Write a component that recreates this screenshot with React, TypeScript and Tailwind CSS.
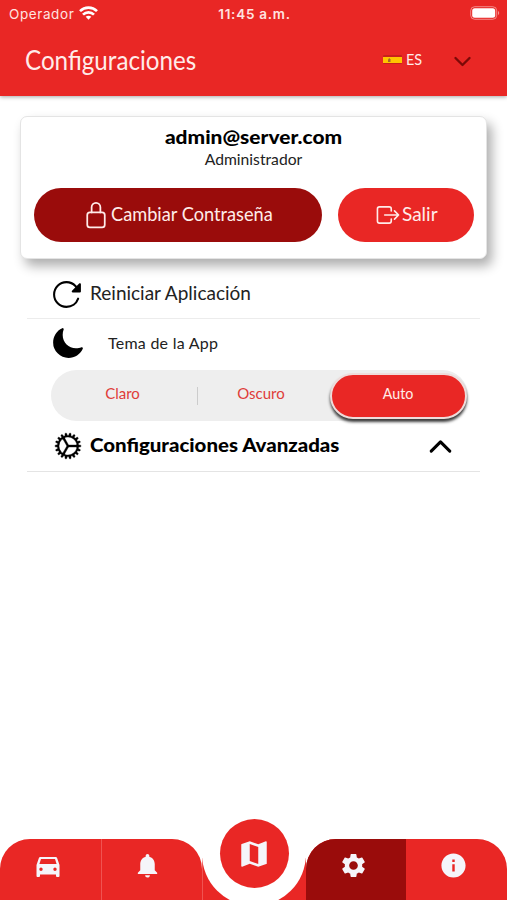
import React from 'react';
import {
  IoChevronDown,
  IoChevronUp,
  IoCogOutline,
  IoExitOutline,
  IoLockClosedOutline,
  IoMoon,
  IoReload,
} from 'react-icons/io5';
import { MdInfo, MdMap, MdNotifications, MdSettings } from 'react-icons/md';

const StatusBar: React.FC = () => (
  <div className="grid h-7 grid-cols-3 items-center pl-[9px] pr-[7px] font-['Inter',sans-serif] text-[13.5px] text-[#ffe3e0]">
    <div className="flex items-center gap-[5px]">
      <span className="tracking-[0.6px]">Operador</span>
      <svg className="mt-[-2px]" width="19" height="14" viewBox="0 0 19 14" fill="none" stroke="#fff" strokeWidth="2.7">
        <path d="M1 5.1c4.7-4.6 12.3-4.6 17 0" />
        <path d="M4 8.6c3.1-3 7.9-3 11 0" />
        <path d="M6.7 10.8L9.5 13.7l2.8-2.9c-1.6-1.5-4-1.5-5.6 0z" fill="#fff" stroke="none" />
      </svg>
    </div>
    <span className="whitespace-nowrap text-center font-semibold tracking-[0.75px]">11:45 a.m.</span>
    <svg className="mt-[-2px] justify-self-end" width="30" height="14" viewBox="0 0 30 14">
      <rect x="0.7" y="0.7" width="26" height="12.6" rx="4" fill="none" stroke="#fff" strokeOpacity="0.45" />
      <rect x="2.2" y="2.2" width="23" height="9.6" rx="2.5" fill="#fff" />
      <path d="M28 5v4c1.6-.7 1.6-3.3 0-4z" fill="#fff" fillOpacity="0.5" />
    </svg>
  </div>
);

const SpainFlag: React.FC = () => (
  <svg className="mt-[-4px]" width="19" height="11" viewBox="0 0 19 11">
    <rect y="1" width="19" height="9" rx="1" fill="#c8201c" />
    <rect y="3" width="19" height="6" fill="#ffc400" />
    <path d="M5 8V5.5L6.3 4 7.5 5.5V8z" fill="#a5662a" />
  </svg>
);

const Header: React.FC = () => (
  <header className="h-24 bg-[#e92725] shadow-[0_1px_4px_rgba(0,0,0,0.35)]">
    <StatusBar />
    <div className="flex h-[66px] items-center pl-[25px] pr-[33px] text-[#ffece9]">
      <h1 className="mt-[-2px] w-[180px] origin-left scale-x-[0.93] whitespace-nowrap text-[26px]">Configuraciones</h1>
      <div className="ml-auto flex items-center">
        <SpainFlag />
        <span className="ml-[4px] mt-[-4px] w-[17px] origin-left scale-x-[0.9] text-[16px]">ES</span>
        <IoChevronDown className="ml-[27px] mr-[-1px] text-[25px] text-[#7c0907]" />
      </div>
    </div>
  </header>
);

const AccountCard: React.FC = () => (
  <section className="mx-5 mt-5 flex h-[143px] flex-col rounded-[7px] border border-[#e4e4e4] bg-white px-[13px] shadow-[5px_7px_12px_rgba(0,0,0,0.32)]">
    <p className="mt-[8px] origin-center scale-x-[1.1] text-center text-[19px] font-black leading-6 text-black">
      admin@server.com
    </p>
    <p className="origin-center scale-x-[0.98] text-center text-[16px] leading-5 text-[#222]">Administrador</p>
    <div className="mt-[19px] flex gap-4 text-[20px] text-[#ffece9]">
      <button className="flex h-[54px] w-[288px] shrink-0 items-center justify-center rounded-full bg-[#9a0c0b]">
        <IoLockClosedOutline className="mr-[1px] text-[28px]" />
        <span className="mt-[-4px] w-[163px] origin-left scale-x-[0.91] whitespace-nowrap text-left">
          Cambiar Contraseña
        </span>
      </button>
      <button className="flex h-[54px] w-[136px] shrink-0 items-center justify-center rounded-full bg-[#e92725]">
        <IoExitOutline className="mr-[1px] mt-[-1px] text-[26px]" />
        <span className="mt-[-4px] w-[35px] origin-left scale-x-[0.95] text-left">Salir</span>
      </button>
    </div>
  </section>
);

const ThemeSelector: React.FC = () => (
  <div className="ml-6 flex h-[51px] w-[417px] items-center rounded-full bg-[#eee] text-[15px] text-[#df3c39]">
    <span className="w-[146px] pb-[4px] pr-[3px] text-center">Claro</span>
    <span className="h-[18px] w-px bg-[#ccc]" />
    <span className="w-[126px] pb-[4px] text-center">Oscuro</span>
    <span className="ml-[6px] flex h-[46px] w-[137px] items-center justify-center rounded-full border-2 border-[#eedcdb] bg-[#e92725] pb-[4px] text-[#ffece9] shadow-[0_3px_3px_rgba(0,0,0,0.75)]">
      <span className="origin-center scale-x-[0.95]">Auto</span>
    </span>
  </div>
);

const SettingsList: React.FC = () => (
  <section className="mx-[27px] mt-[9px] text-[#222]">
    <div className="flex h-[51px] items-center border-b border-[#ececec] pl-[24px]">
      <IoReload className="mt-[2px] text-[33px] text-black" />
      <span className="ml-[6px] text-[19px]">Reiniciar Aplicación</span>
    </div>
    <div className="flex h-[51px] items-center pb-[4px] pl-[24px]">
      <IoMoon className="text-[34px] text-black" />
      <span className="ml-[23px] text-[16px] tracking-[0.25px]">Tema de la App</span>
    </div>
    <ThemeSelector />
    <div className="flex h-[51px] items-center border-b border-[#e4e4e4] pl-[25px] pr-[23px] text-black">
      <IoCogOutline className="text-[32px]" stroke="currentColor" strokeWidth="6" />
      <span className="ml-[6px] mt-[-1px] origin-left scale-x-[1.135] text-[18px] font-black">
        Configuraciones Avanzadas
      </span>
      <IoChevronUp className="ml-auto text-[33px]" />
    </div>
  </section>
);

const CarIcon: React.FC = () => (
  <svg className="mt-[4px]" width="24" height="22" viewBox="0 0 24 22" fill="currentColor">
    <path
      fillRule="evenodd"
      d="M4.500 1h15c.8 0 1.400.5 1.700 1.200L23.500 9v11a1 1 0 0 1-1 1H21a1 1 0 0 1-1-1v-1.500H4V20a1 1 0 0 1-1 1H1.500a1 1 0 0 1-1-1V9l2.300-6.800C3.100 1.500 3.700 1 4.500 1zM5 3L3.400 8h17.200L19 3zM5 11.500a1.700 1.700 0 1 0 0 3.400 1.700 1.700 0 0 0 0-3.400zm14 0a1.700 1.700 0 1 0 0 3.400 1.700 1.700 0 0 0 0-3.400z"
    />
  </svg>
);

const TabBar: React.FC = () => (
  <nav className="relative flex h-[82px] items-end text-[29px] text-[#f5f5fa]">
    <div className="flex h-[61px] w-[202px] overflow-hidden rounded-t-[30px] bg-[#e92725]">
      <span className="flex w-[102px] items-start justify-center border-r border-[#f05351] pr-[6px] pt-[13px]">
        <CarIcon />
      </span>
      <span className="flex w-[100px] items-start justify-center pr-[9px] pt-[12px]">
        <MdNotifications />
      </span>
    </div>
    <div className="relative h-[82px] w-[104px] overflow-hidden">
      <div className="absolute inset-x-0 bottom-0 h-[42px] border-l border-[#f05351] bg-[#e92725]" />
      <div className="absolute left-0 top-[-16px] h-[104px] w-[104px] rounded-full bg-white" />
    </div>
    <div className="flex h-[61px] flex-1 overflow-hidden rounded-t-[30px] bg-[#e92725]">
      <span className="flex w-[100px] items-start justify-center bg-[#9a0c0b] pr-[6px] pt-[12px]">
        <MdSettings />
      </span>
      <span className="flex flex-1 items-start justify-center pr-[7px] pt-[12px]">
        <MdInfo />
      </span>
    </div>
    <span className="absolute left-[220px] top-[1px] flex h-[69px] w-[69px] items-center justify-center rounded-full bg-[#e92725] pr-[1px]">
      <MdMap className="text-[34px]" />
    </span>
  </nav>
);

const App: React.FC = () => {
  return (
    <div className="flex h-[900px] w-[507px] flex-col overflow-hidden bg-white font-['Lato',sans-serif]">
      <Header />
      <main className="flex-1">
        <AccountCard />
        <SettingsList />
      </main>
      <TabBar />
    </div>
  );
};

export default App;
